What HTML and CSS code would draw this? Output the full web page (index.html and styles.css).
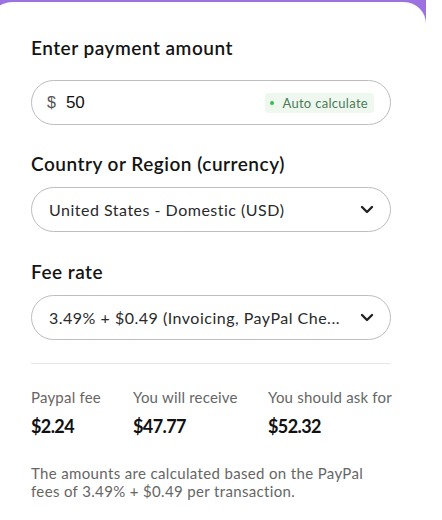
FILE: index.html
```html
<!DOCTYPE html>
<html>
<head>
<meta charset="utf-8">
<link rel="stylesheet" href="styles.css">
</head>
<body>
<div class="frame">
  <div class="card">
    <h2 class="label">Enter payment amount</h2>
    <div class="field amount">
      <span class="cur">$</span>
      <span class="value">50</span>
      <span class="badge"><span class="dot"></span>Auto calculate</span>
    </div>

    <h2 class="label">Country or Region (currency)</h2>
    <div class="field select">
      <span class="sel-text">United States - Domestic (USD)</span>
      <svg class="chev" width="14" height="9" viewBox="0 0 14 9"><path d="M2 2 L7 7 L12 2" fill="none" stroke="#222" stroke-width="2.4" stroke-linecap="round" stroke-linejoin="round"/></svg>
    </div>

    <h2 class="label">Fee rate</h2>
    <div class="field select">
      <span class="sel-text">3.49% + $0.49 (Invoicing, PayPal Che...</span>
      <svg class="chev" width="14" height="9" viewBox="0 0 14 9"><path d="M2 2 L7 7 L12 2" fill="none" stroke="#222" stroke-width="2.4" stroke-linecap="round" stroke-linejoin="round"/></svg>
    </div>

    <hr class="divider">

    <div class="stats">
      <div class="stat"><div class="stat-label">Paypal fee</div><div class="stat-value">$2.24</div></div>
      <div class="stat"><div class="stat-label">You will receive</div><div class="stat-value">$47.77</div></div>
      <div class="stat"><div class="stat-label">You should ask for</div><div class="stat-value">$52.32</div></div>
    </div>

    <p class="note">The amounts are calculated based on the PayPal fees of 3.49% + $0.49 per transaction.</p>
  </div>
</div>
</body>
</html>
```

FILE: styles.css
```css
* { box-sizing: border-box; }
html, body { margin: 0; padding: 0; background: #fff; }
body { font-family: "Lato", "Liberation Sans", sans-serif; }

.frame {
  width: 426px;
  height: 520px;
  background: #9b72e0;
  overflow: hidden;
  padding-top: 2px;
}
.card {
  width: 436px;
  margin-left: -10px;
  height: 530px;
  background: #fff;
  border-radius: 22px 22px 0 0;
  padding: 34px 35px 0 41px;
}
.label {
  margin: 0;
  font-size: 19px;
  line-height: 24px;
  font-weight: 600;
  letter-spacing: 0.5px;
  color: #141414;
}
.field {
  height: 45px;
  border: 1px solid #bdbdbd;
  border-radius: 23px;
  display: flex;
  align-items: center;
}
.amount {
  margin: 20px 0 27px;
  padding: 0 16px 0 15px;
}
.cur {
  font-family: "Liberation Sans", sans-serif;
  font-size: 16px;
  color: #555;
}
.value {
  font-family: "Liberation Sans", sans-serif;
  font-size: 17px;
  color: #111;
  margin-left: 10px;
  flex: 1;
}
.badge {
  display: flex;
  align-items: center;
  background: #eef8ee;
  border-radius: 4px;
  height: 20px;
  padding: 0 6px 0 5px;
  font-size: 13px;
  letter-spacing: 0.3px;
  color: #4c7a5c;
}
.dot {
  width: 4px;
  height: 4px;
  border-radius: 50%;
  background: #3cbc4c;
  margin-right: 8px;
}
.select {
  margin: 11px 0 28px;
  padding: 0 16px 0 17px;
  justify-content: space-between;
}
.sel-text {
  font-size: 16px;
  letter-spacing: 0.5px;
  color: #2a2a2a;
}
.chev { display: block; }
.divider {
  border: 0;
  border-top: 1px solid #e6e6e6;
  margin: -5px 0 0;
}
.stats {
  display: grid;
  grid-template-columns: 102px 135px 1fr;
  margin-top: 23px;
}
.stat-label {
  font-size: 15px;
  line-height: 20px;
  letter-spacing: 0.2px;
  white-space: nowrap;
  color: #666;
}
.stat-value {
  margin-top: 8px;
  font-size: 18px;
  line-height: 22px;
  font-weight: 700;
  letter-spacing: -0.6px;
  color: #111;
}
.note {
  margin: 27px 0 0;
  max-width: 345px;
  font-size: 15px;
  line-height: 18.3px;
  letter-spacing: 0.35px;
  color: #666;
}
```
